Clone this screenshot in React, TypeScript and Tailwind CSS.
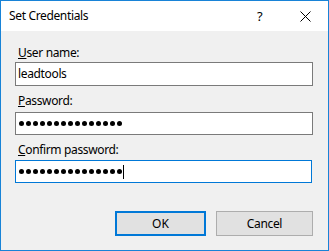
import React from 'react';

const font = { fontFamily: '"Segoe UI", "Noto Sans", sans-serif' };

function Dots() {
  return (
    <div className="flex items-center gap-[2px]">
      {[...Array(15)].map((_, i) => (
        <span key={i} className="block w-[5px] h-[5px] rounded-full bg-black" />
      ))}
    </div>
  );
}

function Label({ first, rest, className }: { first: string; rest: string; className: string }) {
  return (
    <div className={`h-[16px] leading-[16px] pl-[3px] text-[12px] tracking-[-0.35px] text-black ${className}`}>
      <span className="underline underline-offset-[1px]">{first}</span>
      {rest}
    </div>
  );
}

export default function App() {
  return (
    <div
      className="w-[329px] h-[251px] border border-[#1883d7] flex flex-col bg-[#f0f0f0] text-black"
      style={font}
    >
      {/* Title bar */}
      <div className="h-[30px] bg-white flex items-center pl-[8px] shrink-0">
        <span className="text-[12px] leading-[16px] tracking-[-0.35px] flex-1">Set Credentials</span>
        <span className="text-[13px] leading-[16px] w-[7px] mr-[36px]">?</span>
        <svg width="11" height="11" viewBox="0 0 11 11" className="mr-[17px]">
          <path d="M0.5 0.5 L10.5 10.5 M10.5 0.5 L0.5 10.5" stroke="#000" strokeWidth="1" />
        </svg>
      </div>

      {/* Body */}
      <div className="flex-1 flex flex-col pt-[14px] pl-[14px] pr-[15px]">
        <Label first="U" rest="ser name:" className="" />
        <div className="mt-[1px] h-[24px] bg-white border border-[#7a7a7a] flex items-center pl-[2px] text-[12px] tracking-[-0.35px]">
          leadtools
        </div>

        <Label first="P" rest="assword:" className="mt-[7px]" />
        <div className="mt-[3px] h-[23px] bg-white border border-[#7a7a7a] flex items-center pl-[3px]">
          <Dots />
        </div>

        <Label first="C" rest="onfirm password:" className="mt-[7px]" />
        <div className="mt-[2px] h-[23px] w-[297px] bg-white border border-[#0078d7] flex items-center pl-[3px]">
          <Dots />
          <span className="block w-[1px] h-[14px] bg-black ml-[1px]" />
        </div>

        <div className="mt-[28px] flex justify-end gap-[10px]">
          <button className="w-[91px] h-[25px] bg-[#e1e1e1] border-2 border-[#0078d7] text-[12px] leading-[16px]">
            OK
          </button>
          <button className="w-[97px] h-[25px] bg-[#e1e1e1] border border-[#adadad] text-[12px] leading-[16px] tracking-[-0.35px]">
            Cancel
          </button>
        </div>
      </div>
    </div>
  );
}
